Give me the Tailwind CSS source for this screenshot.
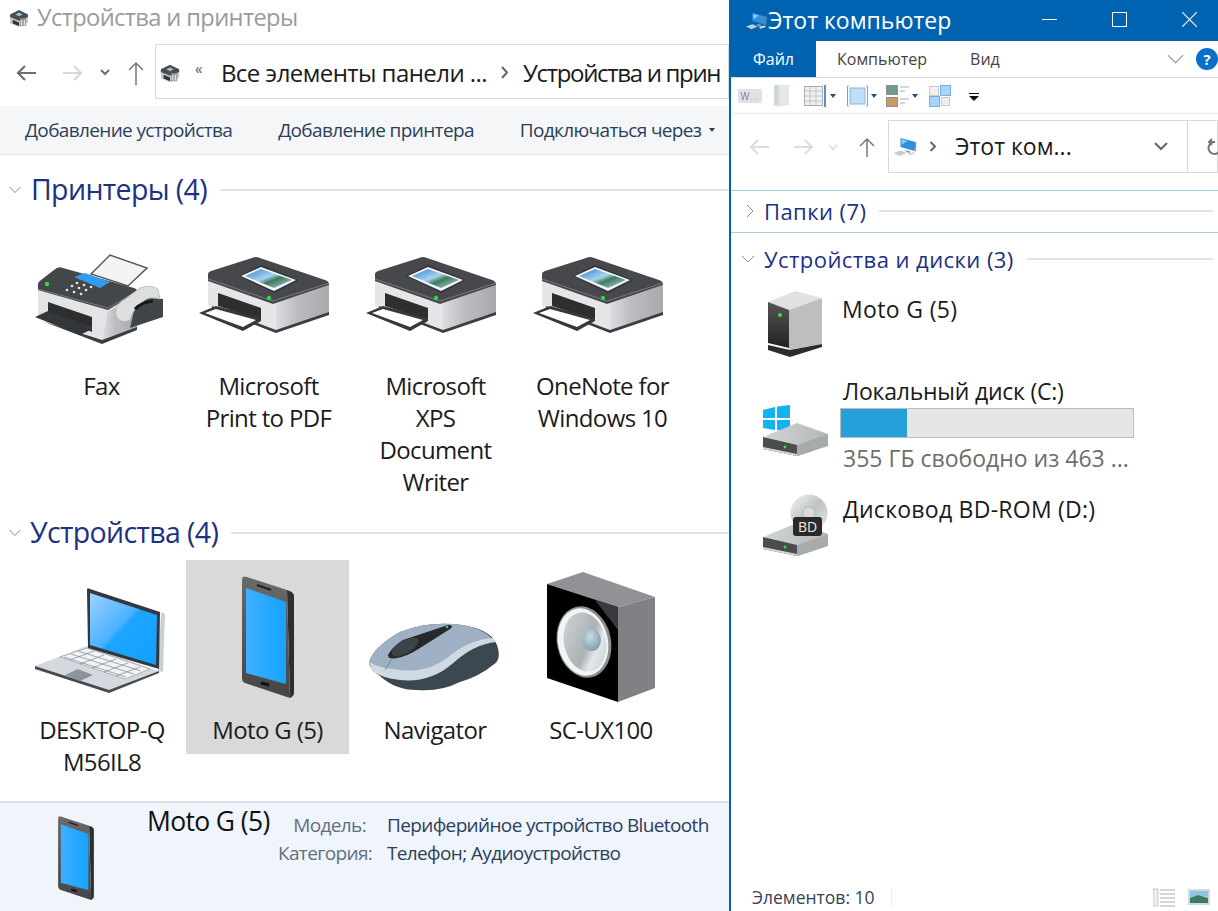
<!DOCTYPE html>
<html lang="ru">
<head>
<meta charset="UTF-8" />
<title>Устройства и принтеры</title>
<script src="https://cdn.jsdelivr.net/npm/@tailwindcss/browser@4"></script>
</head>
<body class="w-[1218px] h-[911px] overflow-hidden bg-white font-['Open_Sans',sans-serif]">

<!-- shared icons, coordinates are screen pixels of the first use -->
<svg width="0" height="0" class="absolute">
  <defs>
    <linearGradient id="photo" x1="0" y1="0" x2="1" y2="1"><stop offset="0" stop-color="#2f7fd0"/><stop offset=".45" stop-color="#a9d3ee"/><stop offset=".6" stop-color="#3f7a5c"/><stop offset="1" stop-color="#b9d9ea"/></linearGradient>
    <linearGradient id="scr" x1="0" y1="0" x2="1" y2="1"><stop offset="0" stop-color="#9ed2ff"/><stop offset=".45" stop-color="#4ab2ff"/><stop offset=".5" stop-color="#1ea4ff"/><stop offset="1" stop-color="#12a0ff"/></linearGradient>
    <linearGradient id="phonebody" x1="0" y1="0" x2="0" y2="1"><stop offset="0" stop-color="#6a6a6a"/><stop offset="1" stop-color="#454545"/></linearGradient>
    <linearGradient id="phonescr" x1="0" y1="0" x2="1" y2="0"><stop offset="0" stop-color="#3db0ff"/><stop offset="1" stop-color="#16a2ff"/></linearGradient>
    <linearGradient id="spk" x1="0" y1="0" x2="1" y2="1"><stop offset="0" stop-color="#d3d7d8"/><stop offset=".55" stop-color="#a9b2b6"/><stop offset=".7" stop-color="#e4e8ea"/><stop offset="1" stop-color="#bfc8cc"/></linearGradient>
    <radialGradient id="dome" cx=".4" cy=".35" r=".7"><stop offset="0" stop-color="#c9dbe2"/><stop offset="1" stop-color="#7d9aa8"/></radialGradient>
    <linearGradient id="side" x1="0" y1="0" x2="1" y2="0"><stop offset="0" stop-color="#dcdde0"/><stop offset=".4" stop-color="#bcbdc0"/><stop offset="1" stop-color="#a8a9ac"/></linearGradient>
    <linearGradient id="disc" x1="0" y1="0" x2="1" y2="1"><stop offset="0" stop-color="#f2f4f2"/><stop offset=".5" stop-color="#bfc4c2"/><stop offset="1" stop-color="#e6e8e8"/></linearGradient>
    <linearGradient id="dtop" x1="0" y1="0" x2="1" y2="0"><stop offset="0" stop-color="#d2d5d6"/><stop offset="1" stop-color="#b4b8b9"/></linearGradient>
    <linearGradient id="hdd" x1="0" y1="0" x2="0" y2="1"><stop offset="0" stop-color="#555"/><stop offset="1" stop-color="#222"/></linearGradient>

    <symbol id="printer" viewBox="198 250 140 90">
      <path d="M207 278 L207 306 L275 331 L328 313 L328 283 Z" fill="#e5e6e8"/>
      <path d="M275 303 L328 285 L328 313 L275 331 Z" fill="url(#side)"/>
      <path d="M211 308 L275 333 L328 315 L328 312 L275 330 L211 306 Z" fill="#3b3d3f"/>
      <path d="M207 274 Q207 272 210 271 L251 258 Q255 256 259 258 L324 280 Q328 281 328 285 L272 304 L207 281 Z" fill="#46484b"/>
      <path d="M207 279 L272 301 L328 283" fill="none" stroke="#77797b" stroke-width="1"/>
      <path d="M238 276 L260 265 L298 280 L273 293 Z" fill="#343538"/>
      <path d="M240 276 L260 267 L295 280 L273 291 Z" fill="#f4f7f9"/>
      <path d="M244 276 L260 269 L291 280 L273 288 Z" fill="url(#photo)"/>
      <path d="M217 293 L260 308 L260 320 L217 306 Z" fill="#2c2e30"/>
      <path d="M198 313 L215 306 L260 318 L260 321 L242 331 Z" fill="#36383a"/>
      <path d="M204 313 L215 309 L255 320 L242 327 Z" fill="#fff"/>
      <circle cx="268" cy="298" r="2.200" fill="#2edb3c"/>
    </symbol>

    <symbol id="phone" viewBox="243 576 52 122" preserveAspectRatio="xMidYMid meet">
      <path d="M288 590 Q295 592 295 596 L295 693 Q295 696 291 698 Z" fill="#2e2e2e"/>
      <path d="M243 580 Q243 575 248 577 L288 590 L291 698 L246 683 Q243 682 243 678 Z" fill="url(#phonebody)"/>
      <path d="M247 588 L287 602 L287 684 L247 673 Z" fill="url(#phonescr)"/>
      <path d="M258 585 L272 590" stroke="#222" stroke-width="2"/>
      <path d="M262 683 L270 685" stroke="#111" stroke-width="3"/>
    </symbol>

    <symbol id="smallprinter" viewBox="0 0 24 20">
      <path d="M2 8 L2 16 L12 20 L22 15 L22 7 Z" fill="#c9cbcd"/>
      <path d="M2 6 L12 1 L22 6 L22 9 L12 13 L2 9 Z" fill="#4b4d50"/>
      <path d="M8 6 L12 4 L16 6 L12 8 Z" fill="#9dc4dd"/>
      <path d="M5 12 L12 15 L12 19 L5 16 Z" fill="#303235"/>
      <path d="M13 10 H20 V19 H13 Z" fill="#8b8f92" opacity=".8"/>
      <path d="M15 12 V18 M18 12 V18" stroke="#e9e9e9" stroke-width="1.200"/>
    </symbol>

    <symbol id="drivebase" viewBox="763 420 66 36">
      <path d="M763 437 L763 448 L798 456 L828 446 L828 434 Z" fill="#a7abac"/>
      <path d="M763 437 L763 449 L797 456 L797 443 Z" fill="#4a4c4e"/>
      <path d="M763 447 L797 454 L797 456 L763 449 Z" fill="#d5d7d8"/>
      <path d="M763 437 L797 423 L828 434 L797 445 Z" fill="url(#dtop)"/>
      <circle cx="785" cy="447" r="1.400" fill="#35e04a"/>
    </symbol>

    <symbol id="pc" viewBox="0 0 24 22">
      <path d="M8 2 L23 6 L22 15 L8 11 Z" fill="#2f8fdb"/>
      <path d="M9 3 L15 5 L9 9 Z" fill="#8ccaf3"/>
      <path d="M23 6 L24 6.500 L23 16 L22 15 Z" fill="#7b8792"/>
      <path d="M14 14 L18 15.500 L17 17 L13 16 Z" fill="#9aa2a8"/>
      <path d="M1 17 L8 14.500 L14 17 L7 20 Z" fill="#c4cbd1"/>
      <path d="M15 17.500 L21 16 L23 17.500 L17 19.500 Z" fill="#d2d7db"/>
    </symbol>
  </defs>
</svg>

<div class="flex h-[911px]">
  <!-- left window: devices and printers -->
  <div class="w-[729px] h-full flex flex-col overflow-hidden tracking-[-0.04em] shrink-0">
    <div class="h-[36px] flex items-center pl-[8px] gap-[7px] shrink-0">
      <svg class="w-[22px] h-[18px]"><use href="#smallprinter"/></svg>
      <span class="text-[23.700px] leading-none text-[#9b9b9b] whitespace-nowrap">Устройства и принтеры</span>
    </div>

    <div class="h-[70px] flex items-center shrink-0">
      <div class="w-[155px] flex items-center pl-[15px] mt-[3px] shrink-0">
        <svg class="w-[22px] h-[18px]" viewBox="0 0 22 18" fill="none" stroke="#6e6e6e" stroke-width="2.200"><path d="M21 9H3M10 2 3 9l7 7"/></svg>
        <svg class="w-[22px] h-[18px] ml-[25px]" viewBox="0 0 22 18" fill="none" stroke="#d8d8d8" stroke-width="2.200"><path d="M1 9h18M12 2l7 7-7 7"/></svg>
        <svg class="w-[10px] h-[8px] ml-[16px]" viewBox="0 0 10 8" fill="none" stroke="#6e6e6e" stroke-width="2"><path d="M1 1l4 4 4-4"/></svg>
        <svg class="w-[18px] h-[24px] ml-[17px]" viewBox="0 0 18 24" fill="none" stroke="#777" stroke-width="1.500"><path d="M9 24V2M2 9l7-7 7 7"/></svg>
      </div>
      <div class="h-[55px] flex-1 min-w-0 border border-[#dcdcdc] flex items-center pl-[3px] pt-[3px] whitespace-nowrap overflow-hidden tracking-[-0.035em]">
        <svg class="w-[22px] h-[20px] shrink-0"><use href="#smallprinter"/></svg>
        <span class="ml-[14px] text-[15px] text-[#555] -mt-[8px]">«</span>
        <span class="ml-[19px] text-[24px] leading-none text-[#1a1a1a]">Все элементы панели ...</span>
        <svg class="w-[9px] h-[13px] ml-[13px] shrink-0" viewBox="0 0 9 13" fill="none" stroke="#666" stroke-width="2"><path d="M2 1l5 5.500L2 12"/></svg>
        <span class="ml-[14px] text-[24px] leading-none text-[#1a1a1a] tracking-[-0.055em]">Устройства и прин</span>
      </div>
    </div>

    <div class="h-[49px] bg-[#f5f6f7] border-b border-[#e6e6e6] flex items-center pl-[25px] text-[19px] text-[#2b3f5c] whitespace-nowrap shrink-0">
      <span>Добавление устройства</span>
      <span class="ml-[46px]">Добавление принтера</span>
      <span class="ml-[46px]">Подключаться через</span>
      <span class="ml-[8px] w-0 h-0 border-x-[3.500px] border-x-transparent border-t-[4px] border-t-[#2b3f5c]"></span>
    </div>

    <!-- groups -->
    <div class="flex-1 min-h-0">
      <div class="h-[70px] flex items-center pl-[9px] pb-[1px]">
        <svg class="w-[12px] h-[8px]" viewBox="0 0 12 8" fill="none" stroke="#7d8a99" stroke-width="1"><path d="M.5 1 6 6.500 11.500 1"/></svg>
        <span class="ml-[10px] text-[28.500px] leading-none text-[#1c3183] whitespace-nowrap">Принтеры (4)</span>
        <div class="ml-[13px] flex-1 h-[2px] bg-[#e3e3e3]"></div>
      </div>
      <div class="flex pl-[18px] h-[288px] text-[24px] leading-[32px] text-center text-[#1c1c1c]">
        <div class="w-[167px]">
          <svg class="w-[140px] h-[96px] mx-auto mt-[25px]" viewBox="32 248 140 96">
            <path d="M91 272 L110 253 L147 266 L128 284 Z" fill="#f3f3f3" stroke="#55585a" stroke-width="1.500"/>
            <path d="M38 285 L38 316 L102 340 L137 326 L137 292 Z" fill="#e2e4e6"/>
            <path d="M108 309 L137 296 L137 326 L102 340 Z" fill="url(#side)"/>
            <path d="M42 319 L102 342 L137 328 L137 325 L102 338 Z" fill="#3b3d3f"/>
            <path d="M38 282 Q38 280 41 278 L54 268 Q58 264 63 266 L134 286 Q139 288 136 291 L108 308 L38 288 Z" fill="#44474a"/>
            <path d="M38 287 L108 306 L137 289" fill="none" stroke="#77797b"/>
            <path d="M74 275 L85 271 L110 280 L100 286 Z" fill="#2f9cf4"/>
            <g fill="#e8e8e8"><circle cx="77" cy="281" r="1.300"/><circle cx="84" cy="283" r="1.300"/><circle cx="91" cy="285" r="1.300"/><circle cx="72" cy="284" r="1.300"/><circle cx="79" cy="286" r="1.300"/><circle cx="86" cy="288" r="1.300"/><circle cx="67" cy="288" r="1.300"/><circle cx="74" cy="290" r="1.300"/><circle cx="81" cy="292" r="1.300"/></g>
            <circle cx="47" cy="282" r="2.200" fill="#2edb3c"/>
            <path d="M48 300 L92 315 L92 330 L48 311 Z" fill="#2c2e30"/>
            <path d="M35 315 L48 309 L92 325 L92 327 L80 333 Z" fill="#33363a"/>
            <path d="M137 295 L163 297 L163 315 L130 326 Z" fill="#3f4549"/>
            <path d="M115 311 Q116 301 125 297 L140 286 Q150 282 158 287 L160 297 Q152 294 145 298 Q133 306 130 318 Q122 322 117 316 Z" fill="#dcdfde" stroke="#a9aeb0" stroke-width=".7"/>
            <path d="M135 307 Q142 300 153 299" fill="none" stroke="#16181a" stroke-width="3"/>
          </svg>
          <div class="mt-[24px] px-[12px]">Fax</div>
        </div>
        <div class="w-[167px]">
          <svg class="w-[140px] h-[90px] mx-auto mt-[25px]"><use href="#printer"/></svg>
          <div class="mt-[30px] px-[12px]">Microsoft Print to PDF</div>
        </div>
        <div class="w-[167px]">
          <svg class="w-[140px] h-[90px] mx-auto mt-[25px]"><use href="#printer"/></svg>
          <div class="mt-[30px] px-[12px]">Microsoft XPS Document Writer</div>
        </div>
        <div class="w-[167px]">
          <svg class="w-[140px] h-[90px] mx-auto mt-[25px]"><use href="#printer"/></svg>
          <div class="mt-[30px] px-[12px]">OneNote for Windows 10</div>
        </div>
      </div>

      <div class="h-[43px] flex items-center pl-[9px] -mt-[2px] mb-[6px]">
        <svg class="w-[12px] h-[8px]" viewBox="0 0 12 8" fill="none" stroke="#7d8a99" stroke-width="1"><path d="M.5 1 6 6.500 11.500 1"/></svg>
        <span class="ml-[9px] text-[28.500px] leading-none text-[#1c3183] whitespace-nowrap">Устройства (4)</span>
        <div class="ml-[13px] flex-1 h-[2px] bg-[#e3e3e3]"></div>
      </div>
      <div class="flex pl-[18px] text-[24px] leading-[32px] text-center text-[#1c1c1c]">
        <div class="w-[168px] pt-[13px]">
          <svg class="w-[140px] h-[122px] mx-auto" viewBox="32 573 140 122">
            <path d="M161 612 L165 614 L163 672 L158 671 Z" fill="#c9d0d6"/>
            <path d="M35 666 L87 646 L159 671 L109 691 Z" fill="#d3d9df"/>
            <path d="M35 666 L109 690 L159 671 L159 673 L109 693 L35 669 Z" fill="#444a50"/>
            <path d="M60 657 L87 648 L150 669 L125 679 Z" fill="#f1f3f5" stroke="#8a9198" stroke-width=".6"/>
            <path d="M64 657 L126 677 M71 654 L134 674 M78 651 L141 671 M70 660 L94 651 M80 664 L104 655 M92 668 L116 659 M104 672 L128 663 M116 676 L140 667" stroke="#7e858c" stroke-width=".7"/>
            <path d="M65 675 L78 669 L93 675 L80 681 Z" fill="#8c949b"/>
            <path d="M87 590 Q87 587 90 589 L160 612 L159 669 L88 648 Z" fill="#34383c"/>
            <path d="M90 593 L157 615 L156 665 L90 645 Z" fill="url(#scr)"/>
          </svg>
          <div class="mt-[19px]">DESKTOP-Q<br>M56IL8</div>
        </div>
        <div class="w-[163px] h-[194px] bg-[#d9d9d9] pt-[16px]">
          <svg class="w-[52px] h-[122px] mx-auto"><use href="#phone"/></svg>
          <div class="mt-[16px]">Moto G (5)</div>
        </div>
        <div class="w-[172px] pt-[13px]">
          <svg class="w-[140px] h-[122px] ml-[16px]" viewBox="365 573 140 122">
            <path d="M369 663 Q372 648 400 632 Q425 622 453 624 Q490 627 497 645 Q502 660 493 665 Q480 676 460 682 Q440 692 417 690 Q395 690 380 676 Q370 670 369 663 Z" fill="#3c4850"/>
            <path d="M369 663 Q372 648 400 632 Q425 622 453 624 Q482 626 493 640 Q470 640 447 660 Q425 676 393 670 Q378 668 369 663 Z" fill="#9fb0c4"/>
            <path d="M369 662 Q380 668 393 669 Q425 675 447 658 Q468 640 493 638 L496 642 Q474 644 452 664 Q430 683 400 680 Q382 678 372 671 Z" fill="#d0d9e1"/>
            <path d="M388 655 Q393 646 403 640 L448 625 Q455 625 450 629 L420 648 Q408 656 397 658 Q388 660 388 655 Z" fill="#25292c"/>
            <ellipse cx="405" cy="647" rx="15" ry="6.500" transform="rotate(-30 405 647)" fill="#3e4346"/>
            <path d="M392 658 L385 670" stroke="#6d7c8d" stroke-width=".8"/>
            <circle cx="447" cy="627" r="1.300" fill="#3fd24d"/>
          </svg>
          <div class="mt-[19px]">Navigator</div>
        </div>
        <div class="w-[160px] pt-[12px]">
          <svg class="w-[110px] h-[132px] ml-[25px]" viewBox="546 572 110 132">
            <path d="M547 584 L583 572 L655 597 L618 607 Z" fill="#909295"/>
            <path d="M618 607 L655 597 L655 688 L618 702 Z" fill="#7f8185"/>
            <path d="M547 584 L618 607 L618 702 L547 678 Z" fill="#000"/>
            <path d="M618 607 L595 600 L618 630 Z" fill="#3a3a3c"/>
            <ellipse cx="584" cy="642" rx="27" ry="36" transform="rotate(-12 584 642)" fill="#8c8f90"/>
            <ellipse cx="583" cy="642" rx="25" ry="34" transform="rotate(-12 583 642)" fill="#f2f4f5"/>
            <ellipse cx="585" cy="642" rx="21" ry="30" transform="rotate(-12 585 642)" fill="url(#spk)"/>
            <ellipse cx="592" cy="640" rx="9" ry="11" fill="url(#dome)"/>
          </svg>
          <div class="mt-[10px]">SC-UX100</div>
        </div>
      </div>
    </div>

    <!-- details pane -->
    <div class="h-[110px] bg-[#f0f4fb] border-t-2 border-[#d7e0ea] flex shrink-0 whitespace-nowrap">
      <svg class="w-[38px] h-[84px] ml-[57px] mt-[13px]" preserveAspectRatio="none"><use href="#phone"/></svg>
      <div class="ml-[52px] w-[125px] text-[26.500px] leading-none text-[#111] mt-[5px]">Moto G (5)</div>
      <div class="ml-[6px] mt-[9px] self-start grid grid-cols-[88px_auto] gap-x-[21px] gap-y-[2px] text-[19px] leading-[26px]">
        <span class="text-right text-[#5f6f82]">Модель:</span><span class="text-[#2b3f5c]">Периферийное устройство Bluetooth</span>
        <span class="text-right text-[#5f6f82]">Категория:</span><span class="text-[#2b3f5c]">Телефон; Аудиоустройство</span>
      </div>
    </div>
  </div>

  <!-- right window: this pc -->
  <div class="w-[489px] h-full border-l-2 border-[#0063b1] bg-white flex flex-col overflow-hidden shrink-0">
    <div class="h-[41px] bg-[#0063b1] flex items-center shrink-0">
      <svg class="w-[22px] h-[20px] ml-[14px]"><use href="#pc"/></svg>
      <span class="ml-[1px] text-[23px] leading-none text-white whitespace-nowrap">Этот компьютер</span>
      <div class="ml-auto flex items-center pr-[21px] gap-[55px] pb-[3px]">
        <div class="w-[15px] h-px bg-white"></div>
        <div class="w-[15px] h-[15px] border border-white"></div>
        <svg class="w-[15px] h-[15px]" viewBox="0 0 15 15" stroke="#fff" stroke-width="1.100"><path d="M0 0 15 15M15 0 0 15"/></svg>
      </div>
    </div>

    <div class="h-[37px] flex items-center border-b border-[#dadbdc] shrink-0 text-[16px] whitespace-nowrap">
      <div class="w-[85px] h-[36px] bg-[#0063b1] text-white flex items-center justify-center">Файл</div>
      <span class="ml-[21px] text-[#444]">Компьютер</span>
      <span class="ml-[43px] text-[#444]">Вид</span>
      <svg class="ml-auto w-[17px] h-[10px]" viewBox="0 0 18 10" fill="none" stroke="#a5a5a5" stroke-width="1.400"><path d="M1 1l8 8 8-8"/></svg>
      <div class="ml-[12px] w-[22px] h-[22px] rounded-full bg-[#0a6fc9] text-white text-[15px] font-bold flex items-center justify-center">?</div>
    </div>

    <!-- quick access icons -->
    <div class="h-[36px] flex items-center border-b border-[#ececec] pl-[7px] shrink-0">
      <svg class="w-[24px] h-[14px]" viewBox="0 0 24 14"><rect width="24" height="14" fill="#dfe2e6"/><path d="M3 3l2 8 2-8 2 8 2-8" fill="none" stroke="#8c96a3" stroke-width="1"/><path d="M13 10h8" stroke="#aab2bb" stroke-dasharray="1 1"/></svg>
      <svg class="w-[15px] h-[22px] ml-[12px]" viewBox="0 0 15 22"><path d="M0 0h15v20L3 22 0 20Z" fill="#e3e6ea"/><path d="M0 0h5v20H0Z" fill="#d1d6db"/></svg>
      <svg class="w-[23px] h-[22px] ml-[15px]" viewBox="0 0 23 22"><rect x=".5" y="1.500" width="18" height="19" fill="#eef0f2" stroke="#a9adb1"/><path d="M1 6h17M1 11h17M1 16h17M6 2v18M12 2v18" stroke="#c3c7cb"/><path d="M21 0v22" stroke="#5c8fc4" stroke-width="2"/></svg>
      <span class="ml-[3px] w-0 h-0 border-x-[3.500px] border-x-transparent border-t-[4px] border-t-[#1f4e85]"></span>
      <svg class="w-[21px] h-[22px] ml-[11px]" viewBox="0 0 21 22"><rect x="3" y="3" width="15" height="16" fill="#bfdff9" stroke="#8cb6dc"/><path d="M2 1H.500v20H2M19 1h1.500v20H19" fill="none" stroke="#9a9a9a"/></svg>
      <span class="ml-[3px] w-0 h-0 border-x-[3.500px] border-x-transparent border-t-[4px] border-t-[#1f4e85]"></span>
      <svg class="w-[23px] h-[22px] ml-[9px]" viewBox="0 0 23 22"><rect x=".5" y=".5" width="11" height="9" fill="#6f9d89" stroke="#8b8f92"/><rect x=".5" y="12.500" width="11" height="9" fill="#cf9a62" stroke="#8b8f92"/><path d="M14 2h9M14 6h5M14 14h9M14 18h5" stroke="#a8acb0"/></svg>
      <span class="ml-[3px] w-0 h-0 border-x-[3.500px] border-x-transparent border-t-[4px] border-t-[#1f4e85]"></span>
      <svg class="w-[22px] h-[22px] ml-[11px]" viewBox="0 0 22 22"><rect x=".5" y="1.500" width="9" height="9" fill="#f0f0f0" stroke="#c9c9c9"/><rect x="11.500" y=".5" width="10" height="10" fill="#a8d4f8" stroke="#6fb0e6"/><rect x=".5" y="11.500" width="10" height="10" fill="#a8d4f8" stroke="#6fb0e6"/><rect x="12.500" y="12.500" width="8" height="8" fill="#eee" stroke="#c9c9c9"/></svg>
      <svg class="w-[10px] h-[8px] ml-[18px] mt-[3px]" viewBox="0 0 10 8"><path d="M0 0h10v1H0ZM0 3h10L5 8Z" fill="#111"/></svg>
    </div>

    <!-- address row -->
    <div class="h-[67px] flex items-start pt-[6px] shrink-0">
      <div class="w-[157px] h-[54px] flex items-center pl-[18px] shrink-0">
        <svg class="w-[20px] h-[16px]" viewBox="0 0 20 16" fill="none" stroke="#dcdcdc" stroke-width="2"><path d="M20 8H2M9 1 2 8l7 7"/></svg>
        <svg class="w-[20px] h-[16px] ml-[25px]" viewBox="0 0 20 16" fill="none" stroke="#dcdcdc" stroke-width="2"><path d="M0 8h18M11 1l7 7-7 7"/></svg>
        <svg class="w-[10px] h-[7px] ml-[14px]" viewBox="0 0 10 7" fill="none" stroke="#dcdcdc" stroke-width="1.600"><path d="M1 1l4 4 4-4"/></svg>
        <svg class="w-[16px] h-[20px] ml-[21px]" viewBox="0 0 16 20" fill="none" stroke="#777" stroke-width="1.500"><path d="M8 20V2M1 9l7-7 7 7"/></svg>
      </div>
      <div class="h-[53px] flex-1 min-w-0 border border-[#d9d9d9] flex items-center whitespace-nowrap">
        <svg class="w-[25px] h-[22px] ml-[3px] shrink-0"><use href="#pc"/></svg>
        <svg class="w-[8px] h-[11px] ml-[12px] shrink-0" viewBox="0 0 8 11" fill="none" stroke="#666" stroke-width="2"><path d="M1.500 1 6 5.500 1.500 10"/></svg>
        <span class="ml-[18px] text-[23px] leading-none text-[#1a1a1a] w-[116px]">Этот ком...</span>
        <svg class="w-[14px] h-[9px] ml-[83px] shrink-0" viewBox="0 0 14 9" fill="none" stroke="#666" stroke-width="2"><path d="M1 1l6 6 6-6"/></svg>
        <div class="ml-[19px] h-[51px] w-px bg-[#d9d9d9] shrink-0"></div>
        <svg class="w-[16px] h-[18px] ml-[19px] shrink-0" viewBox="0 0 16 18" fill="none" stroke="#777" stroke-width="2"><path d="M12 14A6 6 0 1 1 8 4H2M5 1 2 4l3 3"/></svg>
      </div>
    </div>

    <div class="h-[9px] shrink-0"></div>
    <div class="h-[43px] border-y border-[#a9cbe4] flex items-center pb-[2px] shrink-0">
      <svg class="w-[8px] h-[14px] ml-[15px]" viewBox="0 0 8 14" fill="none" stroke="#8a8a8a" stroke-width="1"><path d="M1 1l6 6-6 6"/></svg>
      <span class="ml-[10px] text-[22px] leading-none text-[#1c3183] whitespace-nowrap tracking-[0.02em]">Папки (7)</span>
      <div class="ml-[13px] mr-[5px] flex-1 h-[2px] bg-[#e3e3e3]"></div>
    </div>

    <div class="h-[55px] flex items-center pb-[3px] shrink-0">
      <svg class="w-[14px] h-[8px] ml-[10px]" viewBox="0 0 14 8" fill="none" stroke="#8a8a8a" stroke-width="1"><path d="M1 1l6 6 6-6"/></svg>
      <span class="ml-[9px] text-[22px] leading-none text-[#1c3183] whitespace-nowrap tracking-[0.02em]">Устройства и диски (3)</span>
      <div class="ml-[13px] mr-[5px] flex-1 h-[2px] bg-[#e3e3e3]"></div>
    </div>

    <!-- drive list -->
    <div class="flex-1 min-h-0 text-[23px] leading-none text-[#1a1a1a] whitespace-nowrap">
      <div class="h-[84px] flex">
        <svg class="w-[56px] h-[68px] ml-[36px] mt-[2px] shrink-0" viewBox="767 290 56 68">
          <path d="M768 302 L795 291 L822 298 L789 310 Z" fill="#dfe1e2"/>
          <path d="M789 310 L822 298 L822 344 L789 350 Z" fill="#bcbec0"/>
          <path d="M768 302 L789 310 L789 348 L768 343 Z" fill="url(#hdd)"/>
          <path d="M768 345 L790 350 L822 344 L822 347 L790 357 L768 350 Z" fill="#2c2c2c"/>
          <circle cx="780" cy="315" r="2" fill="#38e04a"/>
        </svg>
        <span class="ml-[19px] mt-[10px] tracking-[0.015em]">Moto G (5)</span>
      </div>
      <div class="h-[106px] flex">
        <div class="w-[70px] ml-[32px] shrink-0 relative mt-[33px]">
          <svg class="w-[27px] h-[27px] absolute left-0 top-0" viewBox="0 0 27 27"><path d="M0 5 12 2v11H0ZM14 1.500 27 0v13H14ZM0 15h12v10L0 23ZM14 15h13v12l-13-2Z" fill="#10b4f0"/></svg>
          <svg class="w-[66px] h-[36px] absolute left-0 top-[15px]"><use href="#drivebase"/></svg>
        </div>
        <div class="ml-[7px] mt-[8px]">
          <div class="ml-[3px] tracking-[-0.01em]">Локальный диск (C:)</div>
          <div class="mt-[5px] w-[294px] h-[30px] bg-[#e6e6e6] border border-[#bcbcbc]">
            <div class="w-[66px] h-full bg-[#26a0da]"></div>
          </div>
          <div class="ml-[3px] mt-[9px] text-[#6d6d6d]">355 ГБ свободно из 463 ...</div>
        </div>
      </div>
      <div class="h-[70px] flex">
        <div class="w-[70px] ml-[32px] shrink-0 relative mt-[16px]">
          <svg class="w-[38px] h-[38px] absolute left-[27px] top-0" viewBox="0 0 38 38"><circle cx="19" cy="19" r="18.500" fill="url(#disc)"/><circle cx="19" cy="19" r="6" fill="#d9dcdb" stroke="#b4b8b7"/></svg>
          <svg class="w-[66px] h-[36px] absolute left-0 top-[26px]"><use href="#drivebase"/></svg>
          <div class="absolute left-[30px] top-[23px] w-[29px] h-[19px] rounded-[3px] bg-[#2a2a2a] text-[#eee] text-[14px] leading-[19px] text-center">BD</div>
        </div>
        <span class="ml-[10px] mt-[20px] tracking-[0.011em]">Дисковод BD-ROM (D:)</span>
      </div>
    </div>

    <!-- status bar -->
    <div class="h-[36px] flex items-center pl-[21px] pt-[8px] shrink-0 text-[17.500px] text-[#34435c] whitespace-nowrap">
      <span>Элементов: 10</span>
      <div class="ml-[16px] w-px h-[18px] bg-[#f0f0f0]"></div>
      <svg class="ml-auto w-[22px] h-[19px]" viewBox="0 0 22 19"><path d="M0 1h5v17H0Z" fill="#eee" stroke="#999" stroke-width=".5"/><path d="M7 2h15M7 6h15M7 10h15M7 14h15M7 18h15" stroke="#aaa"/></svg>
      <svg class="ml-[13px] mr-[8px] w-[22px] h-[16px]" viewBox="0 0 22 16"><rect width="22" height="16" fill="#cfd9e2"/><path d="M2 2h18v6L9 6 2 9Z" fill="#8fc3e3"/><path d="M2 9l8-3 10 3v5H2Z" fill="#3f7a66"/></svg>
    </div>
  </div>
</div>
</body>
</html>
